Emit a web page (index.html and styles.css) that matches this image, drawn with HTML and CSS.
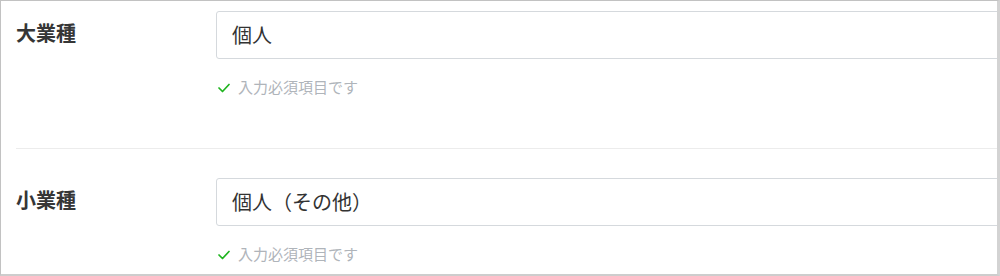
FILE: index.html
```html
<!DOCTYPE html>
<html lang="ja">
<head>
<meta charset="utf-8">
<title>業種</title>
<link rel="stylesheet" href="styles.css">
</head>
<body>
<div class="frame">
  <div class="row row-first">
    <div class="label">大業種</div>
    <div class="field">
      <div class="input">個人</div>
      <div class="hint">
        <svg class="check" width="12" height="10" viewBox="0 0 12 10" aria-hidden="true"><polyline points="1,5 4.5,8.5 11,1.5" fill="none" stroke="#1fb41f" stroke-width="1.7" stroke-linecap="round" stroke-linejoin="round"/></svg>
        <span>入力必須項目です</span>
      </div>
    </div>
  </div>
  <div class="row row-second">
    <div class="label">小業種</div>
    <div class="field">
      <div class="input">個人（その他）</div>
      <div class="hint">
        <svg class="check" width="12" height="10" viewBox="0 0 12 10" aria-hidden="true"><polyline points="1,5 4.5,8.5 11,1.5" fill="none" stroke="#1fb41f" stroke-width="1.7" stroke-linecap="round" stroke-linejoin="round"/></svg>
        <span>入力必須項目です</span>
      </div>
    </div>
  </div>
</div>
</body>
</html>
```
FILE: styles.css
```css
html, body {
  margin: 0;
  padding: 0;
  background: #ffffff;
}

body {
  font-family: "Noto Sans CJK JP", "Noto Sans", sans-serif;
  color: #333333;
}

.frame {
  box-sizing: border-box;
  width: 1000px;
  height: 276px;
  border-top: 1px solid #c2c2c2;
  border-left: 1px solid #c2c2c2;
  border-right: 3px solid #d3d3d3;
  border-bottom: 2px solid #cdcdcd;
  overflow: hidden;
  background: #ffffff;
}

.row {
  display: grid;
  grid-template-columns: 200px 1fr;
  margin-left: 15px;
}

.row-first {
  padding-top: 10px;
  padding-bottom: 51px;
  border-bottom: 1px solid #ececec;
}

.row-second {
  padding-top: 29px;
}

.label {
  font-size: 20px;
  font-weight: 700;
  line-height: 44px;
  height: 48px;
  color: #363636;
}

.field {
  display: flex;
  flex-direction: column;
  min-width: 0;
}

.input {
  box-sizing: border-box;
  width: calc(100% + 40px);
  height: 48px;
  border: 1px solid #d5d9dd;
  border-radius: 3px;
  padding: 0 15px;
  font-size: 20px;
  line-height: 46px;
  color: #333333;
  white-space: nowrap;
}

.hint {
  display: flex;
  align-items: center;
  margin-top: 18px;
  height: 20px;
  font-size: 15px;
  line-height: 20px;
  color: #afb4ba;
}

.check {
  display: block;
  margin-left: 2px;
  margin-right: 8px;
  margin-top: 1px;
  flex: none;
}
```
